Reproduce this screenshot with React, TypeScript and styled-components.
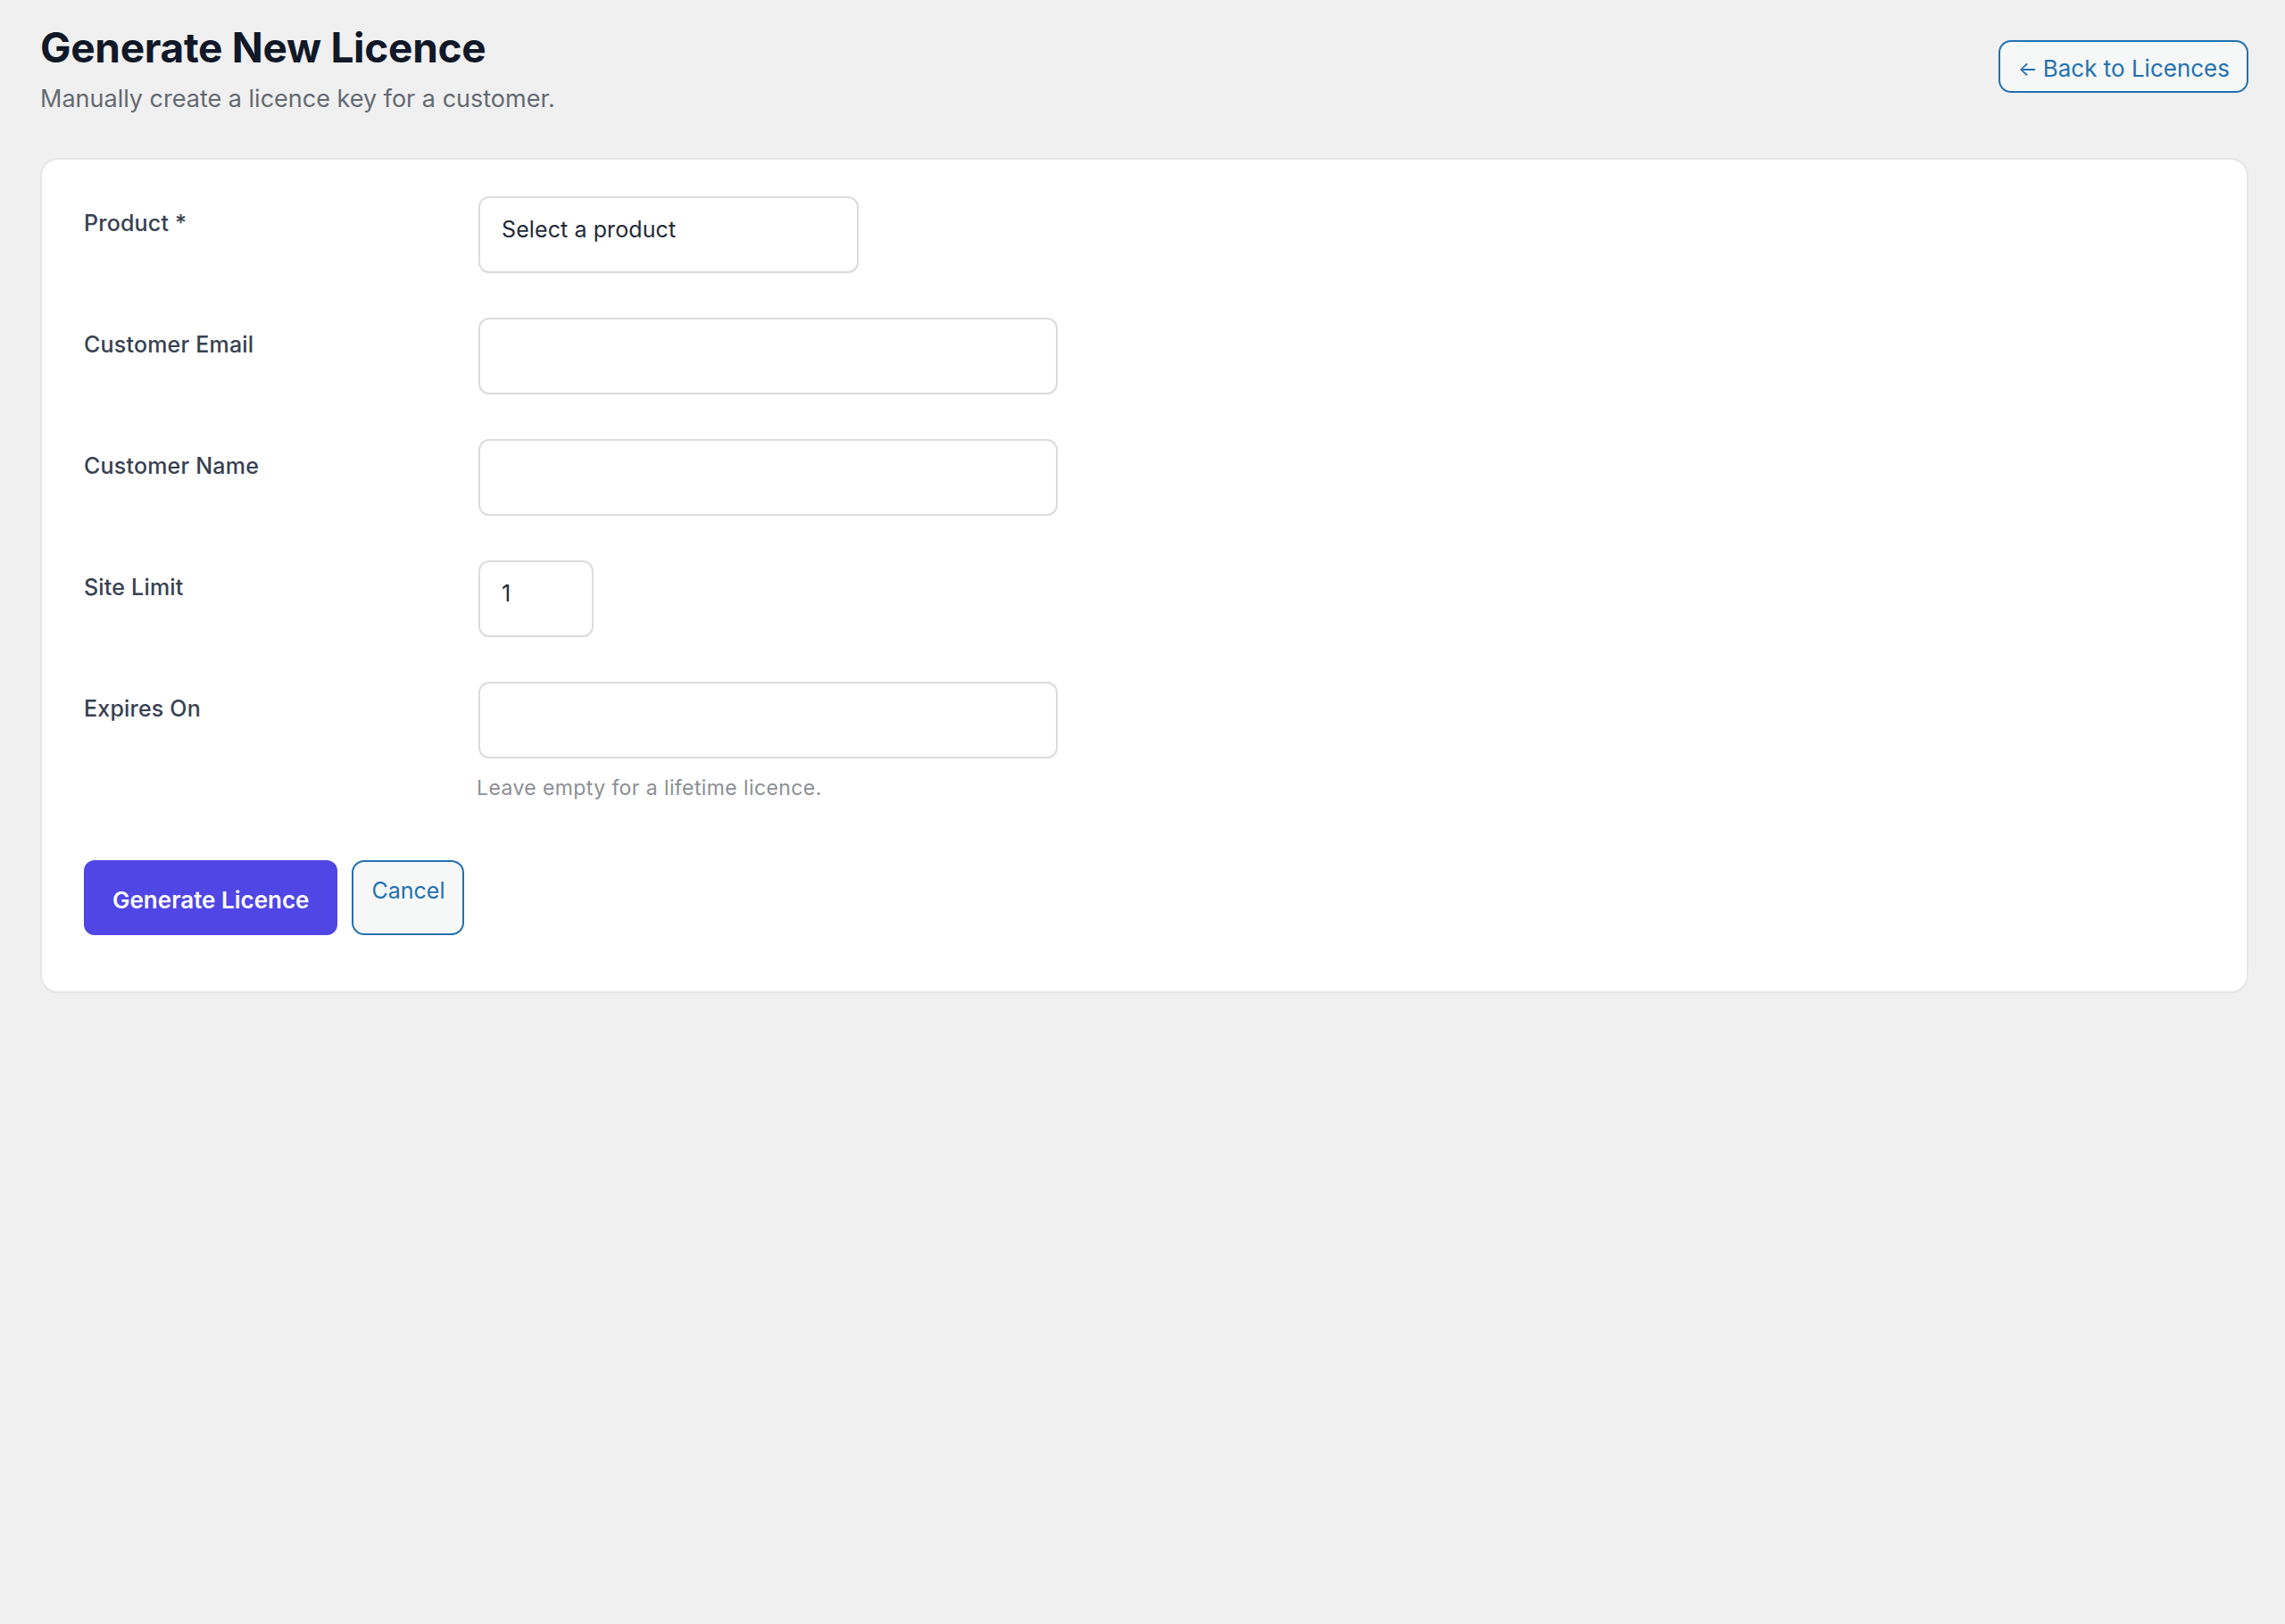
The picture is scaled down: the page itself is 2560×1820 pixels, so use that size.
import React from "react";
import styled, { createGlobalStyle } from "styled-components";

const GlobalStyle = createGlobalStyle`
  html, body {
    margin: 0;
    padding: 0;
    background: #f0f0f1;
    font-family: Inter, "Noto Sans", "Liberation Sans", sans-serif;
    -webkit-font-smoothing: antialiased;
  }
  * { box-sizing: border-box; }
`;

const Page = styled.div`
  min-height: 1820px;
  padding: 26px 41px 40px 45px;
`;

const Header = styled.header`
  display: flex;
  justify-content: space-between;
  align-items: flex-start;
  margin-bottom: 47px;
`;

const TitleBlock = styled.div`
  display: flex;
  flex-direction: column;
  gap: 10px;
`;

const Title = styled.h1`
  margin: 0;
  font-size: 46px;
  line-height: 55px;
  font-weight: 700;
  letter-spacing: -0.3px;
  color: #111827;
`;

const Subtitle = styled.p`
  margin: 0;
  font-size: 27px;
  line-height: 39px;
  color: #646970;
`;

const OutlineButton = styled.a<{ $top?: boolean }>`
  display: inline-flex;
  align-items: ${(p) => (p.$top ? "flex-start" : "center")};
  gap: 6px;
  border: 2px solid #2271b1;
  background: #f6f7f7;
  color: #2271b1;
  border-radius: 14px;
  font-size: 26px;
  line-height: 36px;
  text-decoration: none;
  cursor: pointer;
`;

const BackButton = styled(OutlineButton)`
  margin-top: 19px;
  height: 59px;
  padding: 4px 19px 0 20px;
`;

const Arrow = styled.span`
  font-size: 23px;
`;

const Card = styled.section`
  background: #ffffff;
  border: 2px solid #e6e6e8;
  border-radius: 20px;
  padding: 41px 48px 63px 47px;
`;

const FormGrid = styled.div`
  display: grid;
  grid-template-columns: 442px 1fr;
  row-gap: 50px;
`;

const Label = styled.label`
  padding-top: 13px;
  font-size: 25px;
  line-height: 34px;
  font-weight: 500;
  letter-spacing: 0.2px;
  color: #374151;
`;

const FieldCell = styled.div`
  display: flex;
  flex-direction: column;
  align-items: flex-start;
`;

const inputBase = `
  height: 86px;
  border: 2px solid #dcdcde;
  border-radius: 12px;
  background: #fff;
  padding: 17px 24px 29px 24px;
  font-family: Inter, "Noto Sans", "Liberation Sans", sans-serif;
  font-size: 25px;
  line-height: 36px;
  letter-spacing: 0.1px;
  color: #1f2937;
  outline: none;
  box-shadow: 0 1px 1px rgba(0,0,0,0.03);
`;

const SelectBox = styled.select<{ $width: number }>`
  ${inputBase}
  width: ${(p) => p.$width}px;
  appearance: none;
  -webkit-appearance: none;
`;

const TextInput = styled.input<{ $width: number }>`
  ${inputBase}
  width: ${(p) => p.$width}px;
`;

const Help = styled.p`
  margin: 17px 0 0 -2px;
  font-size: 23px;
  line-height: 33px;
  letter-spacing: 0.4px;
  color: #8c8f94;
`;

const Actions = styled.div`
  display: flex;
  gap: 16px;
  margin-top: 64px;
  height: 84px;
`;

const PrimaryButton = styled.button`
  height: 84px;
  padding: 6px 32px 0 32px;
  border: none;
  border-radius: 12px;
  background: #4f46e5;
  color: #ffffff;
  font-family: Inter, "Noto Sans", "Liberation Sans", sans-serif;
  font-size: 26px;
  font-weight: 600;
  line-height: 36px;
  cursor: pointer;
`;

const CancelButton = styled(OutlineButton)`
  padding: 14px 20px 0 20px;
  font-size: 25px;
`;

export default function App() {
  return (
    <>
      <GlobalStyle />
      <Page>
        <Header>
          <TitleBlock>
            <Title>Generate New Licence</Title>
            <Subtitle>Manually create a licence key for a customer.</Subtitle>
          </TitleBlock>
          <BackButton href="#">
            <Arrow>←</Arrow>
            <span>Back to Licences</span>
          </BackButton>
        </Header>

        <Card>
          <FormGrid>
            <Label>Product *</Label>
            <FieldCell>
              <SelectBox $width={426} defaultValue="">
                <option value="">Select a product</option>
              </SelectBox>
            </FieldCell>

            <Label>Customer Email</Label>
            <FieldCell>
              <TextInput $width={649} type="email" />
            </FieldCell>

            <Label>Customer Name</Label>
            <FieldCell>
              <TextInput $width={649} type="text" />
            </FieldCell>

            <Label>Site Limit</Label>
            <FieldCell>
              <TextInput $width={129} type="text" defaultValue="1" />
            </FieldCell>

            <Label>Expires On</Label>
            <FieldCell>
              <TextInput $width={649} type="text" />
              <Help>Leave empty for a lifetime licence.</Help>
            </FieldCell>
          </FormGrid>

          <Actions>
            <PrimaryButton type="button">Generate Licence</PrimaryButton>
            <CancelButton href="#" $top>
              Cancel
            </CancelButton>
          </Actions>
        </Card>
      </Page>
    </>
  );
}
